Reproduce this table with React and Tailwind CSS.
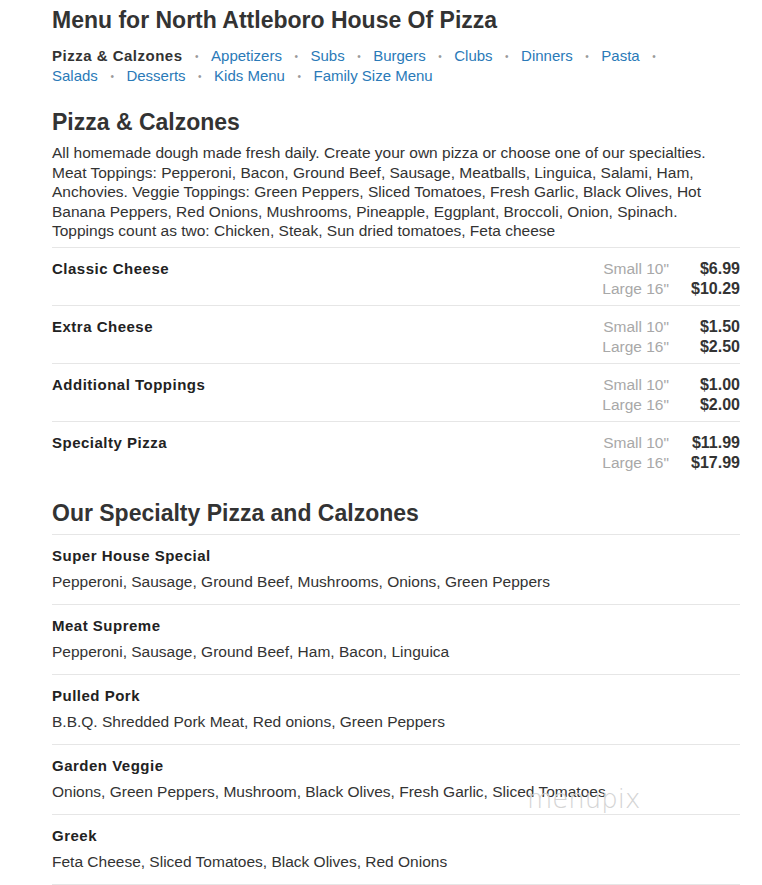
import React from 'react'

const nav = ['Appetizers', 'Subs', 'Burgers', 'Clubs', 'Dinners', 'Pasta', 'Salads', 'Desserts', 'Kids Menu', 'Family Size Menu']

const sized = [
  { name: 'Classic Cheese', small: '$6.99', large: '$10.29' },
  { name: 'Extra Cheese', small: '$1.50', large: '$2.50' },
  { name: 'Additional Toppings', small: '$1.00', large: '$2.00' },
  { name: 'Specialty Pizza', small: '$11.99', large: '$17.99' },
]

const specials = [
  { name: 'Super House Special', desc: 'Pepperoni, Sausage, Ground Beef, Mushrooms, Onions, Green Peppers' },
  { name: 'Meat Supreme', desc: 'Pepperoni, Sausage, Ground Beef, Ham, Bacon, Linguica' },
  { name: 'Pulled Pork', desc: 'B.B.Q. Shredded Pork Meat, Red onions, Green Peppers' },
  { name: 'Garden Veggie', desc: 'Onions, Green Peppers, Mushroom, Black Olives, Fresh Garlic, Sliced Tomatoes' },
  { name: 'Greek', desc: 'Feta Cheese, Sliced Tomatoes, Black Olives, Red Onions' },
]

function Dot() {
  return <span className="inline-block mx-[12.5px] text-[10px] leading-none text-[#9a9a9a] align-middle">•</span>
}

export default function App() {
  return (
    <div className="relative w-[762px] min-h-[885px] bg-white font-['Liberation_Sans',Arial,sans-serif] text-[#333] px-[52px] pt-[6px]">
      <h1 className="text-[23px] leading-[28px] font-bold text-[#333]">Menu for North Attleboro House Of Pizza</h1>

      <div className="mt-[12px] flex flex-wrap text-[15px] leading-[20px] w-[680px]">
        <span className="whitespace-nowrap">
          <span className="font-bold text-[#333] tracking-[0.5px]">Pizza &amp; Calzones</span>
          <Dot />
        </span>
        {nav.map((n, i) => (
          <span key={n} className="whitespace-nowrap">
            <span className="text-[#2a7ab8]">{n}</span>
            {i < nav.length - 1 && <Dot />}
          </span>
        ))}
      </div>

      <h2 className="mt-[22px] text-[23px] leading-[28px] font-bold text-[#333]">Pizza &amp; Calzones</h2>
      <p className="mt-[7px] text-[15.5px] leading-[19.5px] text-[#333] w-[688px]">
        All homemade dough made fresh daily. Create your own pizza or choose one of our specialties. Meat Toppings: Pepperoni, Bacon, Ground Beef, Sausage, Meatballs, Linguica, Salami, Ham, Anchovies. Veggie Toppings: Green Peppers, Sliced Tomatoes, Fresh Garlic, Black Olives, Hot Banana Peppers, Red Onions, Mushrooms, Pineapple, Eggplant, Broccoli, Onion, Spinach. Toppings count as two: Chicken, Steak, Sun dried tomatoes, Feta cheese
      </p>

      <div className="mt-[6px] w-[688px]">
        {sized.map((s) => (
          <div key={s.name} className="flex justify-between border-t border-[#e6e6e6] pt-[11px] pb-[6px]">
            <div className="text-[15px] leading-[20px] font-bold text-[#222] tracking-[0.5px]">{s.name}</div>
            <div className="flex gap-[22px] text-[15.5px] leading-[20px]">
              <div className="text-right text-[#a8a8a8]">
                <div>Small 10"</div>
                <div>Large 16"</div>
              </div>
              <div className="w-[49px] text-right font-bold text-[#333] text-[16px]">
                <div>{s.small}</div>
                <div>{s.large}</div>
              </div>
            </div>
          </div>
        ))}
      </div>

      <h2 className="mt-[20px] text-[23px] leading-[28px] font-bold text-[#333]">Our Specialty Pizza and Calzones</h2>
      <div className="mt-[7px] w-[688px]">
        {specials.map((s) => (
          <div key={s.name} className="border-t border-[#e6e6e6] pt-[11px] pb-[12px]">
            <div className="text-[15px] leading-[20px] font-bold text-[#222] tracking-[0.5px]">{s.name}</div>
            <div className="mt-[6px] text-[15.5px] leading-[20px] text-[#333]">{s.desc}</div>
          </div>
        ))}
        <div className="border-t border-[#e6e6e6]" />
      </div>

      <div className="absolute left-[527px] top-[784px] font-['DejaVu_Sans',sans-serif] font-extralight text-[26px] leading-[30px] text-[#d4d4d4] pointer-events-none">menupix</div>
    </div>
  )
}
